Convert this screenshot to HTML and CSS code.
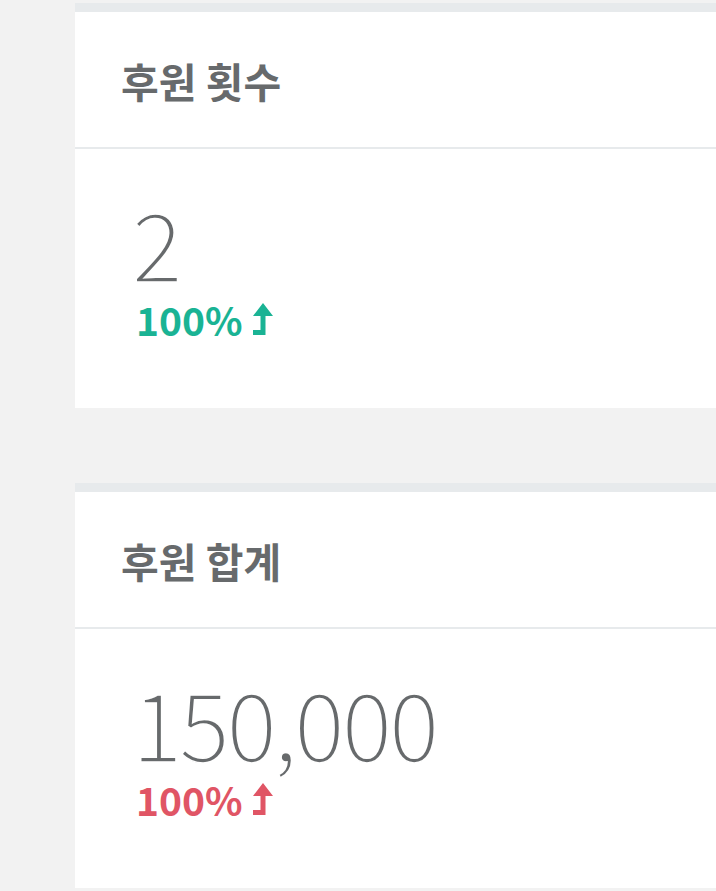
FILE: index.html
```html
<!DOCTYPE html>
<html>
<head>
    <meta charset="utf-8">
    <title>후원 통계</title>
    <link rel="stylesheet" href="styles.css">
</head>
<body>

<div class="wrapper">
    <!-- 후원 횟수 -->
    <div class="ibox">
        <div class="ibox-title">
            <h5>후원 횟수</h5>
        </div>
        <div class="ibox-content">
            <h1 class="stat-number">2</h1>
            <div class="stat-percent text-navy">100%
                <svg class="level-up" viewBox="0 0 20 32"><polygon points="0,13 10,0 20,13 12.5,13 12.5,32 0,32 0,27 7.5,27 7.5,13"/></svg>
            </div>
        </div>
    </div>

    <!-- 후원 합계 -->
    <div class="ibox">
        <div class="ibox-title">
            <h5>후원 합계</h5>
        </div>
        <div class="ibox-content">
            <h1 class="stat-number">150,000</h1>
            <div class="stat-percent text-danger">100%
                <svg class="level-up" viewBox="0 0 20 32"><polygon points="0,13 10,0 20,13 12.5,13 12.5,32 0,32 0,27 7.5,27 7.5,13"/></svg>
            </div>
        </div>
    </div>
</div>

</body>
</html>
```

FILE: styles.css
```css
/* Page background */
body {
    margin: 0;
    background-color: #f2f2f2;
    font-family: "Noto Sans CJK KR", "Noto Sans", sans-serif;
    color: #676a6c;
}

.wrapper {
    padding: 3px 0 0 75px;
    display: flex;
    flex-direction: column;
    gap: 75px;
}

/* Card box */
.ibox {
    background-color: #fff;
    border-top: 9px solid #e7eaec;
}

.ibox-title {
    height: 135px;
    display: flex;
    align-items: center;
    padding: 0 46px;
    border-bottom: 2px solid #e7eaec;
}

.ibox-title h5 {
    margin: 0;
    font-size: 41px;
    font-weight: 700;
}

.ibox-content {
    padding: 45px 61px 0;
    box-sizing: border-box;
    height: 259px;
}

/* Big thin number */
.stat-number {
    margin: 0 0 0 -4px;
    font-size: 94px;
    font-weight: 300;
    line-height: 94px;
    letter-spacing: -3px;
    -webkit-text-stroke: 1.6px #fff;
}

.stat-percent {
    margin-top: 11px;
    font-size: 39px;
    font-weight: 700;
    line-height: 40px;
    display: flex;
    align-items: center;
    gap: 10px;
}

.level-up {
    width: 20px;
    height: 32px;
    fill: currentColor;
}

.text-navy {
    color: #1ab394;
}

.text-danger {
    color: #e05565;
}
```
